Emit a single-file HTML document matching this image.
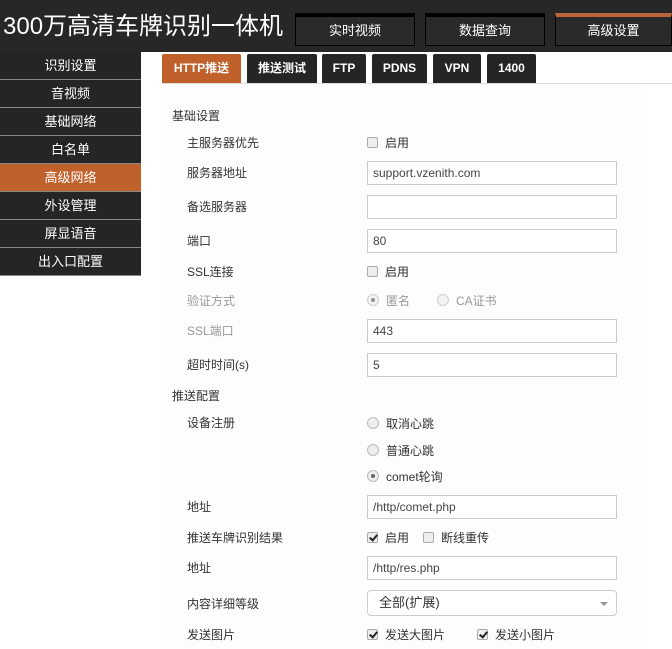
<!DOCTYPE html>
<html><head><meta charset="utf-8"><style>
*{margin:0;padding:0;box-sizing:border-box}
body{width:672px;height:649px;overflow:hidden;background:#fff;font-family:"Liberation Sans","Noto Sans CJK SC",sans-serif;position:relative}
.hdr{position:absolute;left:0;top:0;width:672px;height:52px;background:#272727}
.title{position:absolute;left:3px;top:6px;color:#fff;font-size:24px;white-space:nowrap}
.tt{position:absolute;top:13px;height:33px;width:120px;border:1px solid #000;border-top:4px solid #000;background:#2a2a2a;color:#fff;font-size:13px;text-align:center;line-height:28px}
.nav{position:absolute;left:0;top:52px;width:141px}
.nav div{height:28px;background:#252525;color:#fff;font-size:13px;text-align:center;line-height:27px;border-bottom:1px solid #888}
.nav div.on{background:#c0602a}
.tab{position:absolute;top:54px;height:29px;background:#252525;color:#fff;font-size:12px;font-weight:bold;text-align:center;line-height:29px;border-radius:2px 2px 0 0}
.tline{position:absolute;left:162px;top:83px;width:510px;height:1px;background:#ddd}
.panel{position:absolute;left:162px;top:84px;width:480px;height:565px;background:#fdfdfd}
.l{position:absolute;font-size:12px;color:#333;white-space:nowrap}
.g{color:#999}
.h{left:172px}
.lb{left:187px}
.inp{position:absolute;left:367px;width:250px;height:24px;border:1px solid #ccc;background:#fff;font-size:12px;color:#444;padding-left:5px;line-height:22px}
.cb{display:inline-block;width:11px;height:11px;border:1px solid #aaa;background:#eee;border-radius:2px;vertical-align:-1px;margin-right:7px;position:relative}
.cb.k::after{content:"";position:absolute;left:3px;top:0px;width:3px;height:6px;border:solid #222;border-width:0 2px 2px 0;transform:rotate(40deg)}
.rd{display:inline-block;width:12px;height:12px;border:1px solid #bbb;background:#eee;border-radius:50%;vertical-align:-1px;margin-right:7px;position:relative}
.rd.k::after{content:"";position:absolute;left:3px;top:3px;width:4px;height:4px;border-radius:50%;background:#666}
</style></head><body>
<div class="hdr"></div>
<div class="title">300万高清车牌识别一体机</div>
<div class="tt" style="left:295px">实时视频</div>
<div class="tt" style="left:425px">数据查询</div>
<div class="tt" style="left:555px;width:117px;border-top-color:#b9643a">高级设置</div>
<div class="nav">
<div>识别设置</div><div>音视频</div><div>基础网络</div><div>白名单</div><div class="on">高级网络</div><div>外设管理</div><div>屏显语音</div><div>出入口配置</div>
</div>
<div class="panel"></div>
<div class="tab" style="left:162px;width:79px;background:#c0602a">HTTP推送</div>
<div class="tab" style="left:247px;width:70px">推送测试</div>
<div class="tab" style="left:322px;width:44px">FTP</div>
<div class="tab" style="left:372px;width:55px">PDNS</div>
<div class="tab" style="left:433px;width:48px">VPN</div>
<div class="tab" style="left:487px;width:49px">1400</div>
<div class="tline"></div>

<div class="l h" style="top:107px">基础设置</div>
<div class="l lb" style="top:134px">主服务器优先</div>
<div class="l" style="left:367px;top:134px"><span class="cb"></span>启用</div>
<div class="l lb" style="top:164px">服务器地址</div>
<div class="inp" style="top:161px">support.vzenith.com</div>
<div class="l lb" style="top:198px">备选服务器</div>
<div class="inp" style="top:195px"></div>
<div class="l lb" style="top:232px">端口</div>
<div class="inp" style="top:229px">80</div>
<div class="l lb" style="top:263px">SSL连接</div>
<div class="l" style="left:367px;top:263px"><span class="cb"></span>启用</div>
<div class="l lb g" style="top:292px">验证方式</div>
<div class="l g" style="left:367px;top:292px"><span class="rd k" style="opacity:.7"></span>匿名</div>
<div class="l g" style="left:437px;top:292px"><span class="rd" style="opacity:.7"></span>CA证书</div>
<div class="l lb g" style="top:322px">SSL端口</div>
<div class="inp g" style="top:319px">443</div>
<div class="l lb" style="top:356px">超时时间(s)</div>
<div class="inp" style="top:353px">5</div>
<div class="l h" style="top:387px">推送配置</div>
<div class="l lb" style="top:414px">设备注册</div>
<div class="l" style="left:367px;top:415px"><span class="rd"></span>取消心跳</div>
<div class="l" style="left:367px;top:442px"><span class="rd"></span>普通心跳</div>
<div class="l" style="left:367px;top:468px"><span class="rd k"></span>comet轮询</div>
<div class="l lb" style="top:498px">地址</div>
<div class="inp" style="top:495px">/http/comet.php</div>
<div class="l lb" style="top:529px">推送车牌识别结果</div>
<div class="l" style="left:367px;top:529px"><span class="cb k"></span>启用</div>
<div class="l" style="left:423px;top:529px"><span class="cb"></span>断线重传</div>
<div class="l lb" style="top:559px">地址</div>
<div class="inp" style="top:556px">/http/res.php</div>
<div class="l lb" style="top:595px">内容详细等级</div>
<div class="inp" style="top:590px;height:26px;border-radius:4px;padding-left:11px;line-height:24px;font-size:13px;color:#333">全部(扩展)<span style="position:absolute;right:8px;top:11px;border:4px solid transparent;border-top:4px solid #999;border-bottom:0"></span></div>
<div class="l lb" style="top:626px">发送图片</div>
<div class="l" style="left:367px;top:626px"><span class="cb k"></span>发送大图片</div>
<div class="l" style="left:477px;top:626px"><span class="cb k"></span>发送小图片</div>
</body></html>
